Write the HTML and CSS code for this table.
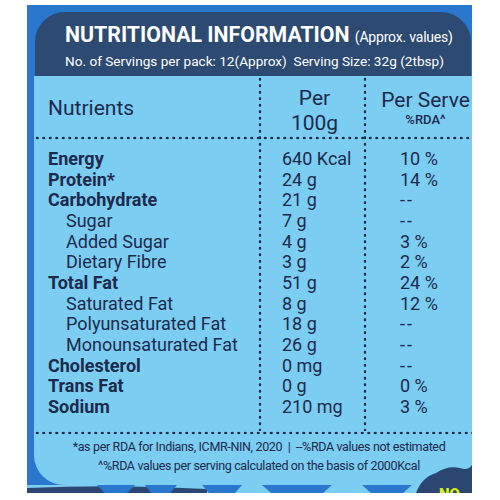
FILE: index.html
```html
<!DOCTYPE html>
<html lang="en">
<head>
    <meta charset="UTF-8">
    <title>Nutritional Information</title>
    <link rel="stylesheet" href="styles.css">
</head>
<body>
    <div class="label">
        <div class="head">
            <h1 class="title">NUTRITIONAL INFORMATION <span class="approx">(Approx. values)</span></h1>
            <p class="serving">No. of Servings per pack: 12(Approx)&nbsp; Serving Size: 32g (2tbsp)</p>
        </div>

        <div class="panel">
            <div class="facts">
                <div class="col col-name">
                    <div class="col-head">Nutrients</div>
                    <ul class="col-body">
                        <li class="main">Energy</li>
                        <li class="main">Protein*</li>
                        <li class="main">Carbohydrate</li>
                        <li class="sub">Sugar</li>
                        <li class="sub">Added Sugar</li>
                        <li class="sub">Dietary Fibre</li>
                        <li class="main">Total Fat</li>
                        <li class="sub">Saturated Fat</li>
                        <li class="sub">Polyunsaturated Fat</li>
                        <li class="sub">Monounsaturated Fat</li>
                        <li class="main">Cholesterol</li>
                        <li class="main">Trans Fat</li>
                        <li class="main">Sodium</li>
                    </ul>
                </div>
                <div class="col col-100">
                    <div class="col-head head-center">Per<br>100g</div>
                    <ul class="col-body">
                        <li>640 Kcal</li>
                        <li>24 g</li>
                        <li>21 g</li>
                        <li>7 g</li>
                        <li>4 g</li>
                        <li>3 g</li>
                        <li>51 g</li>
                        <li>8 g</li>
                        <li>18 g</li>
                        <li>26 g</li>
                        <li>0 mg</li>
                        <li>0 g</li>
                        <li>210 mg</li>
                    </ul>
                </div>
                <div class="col col-serve">
                    <div class="col-head head-center">
                        <span>Per Serve</span>
                        <small>%RDA^</small>
                    </div>
                    <ul class="col-body">
                        <li>10 %</li>
                        <li>14 %</li>
                        <li class="na">--</li>
                        <li class="na">--</li>
                        <li>3 %</li>
                        <li>2 %</li>
                        <li>24 %</li>
                        <li>12 %</li>
                        <li class="na">--</li>
                        <li class="na">--</li>
                        <li class="na">--</li>
                        <li>0 %</li>
                        <li>3 %</li>
                    </ul>
                </div>
            </div>

            <div class="notes">
                <p>*as per RDA for Indians, ICMR-NIN, 2020 &nbsp;|&nbsp; --%RDA values not estimated</p>
                <p>^%RDA values per serving calculated on the basis of 2000Kcal</p>
            </div>
        </div>

        <!-- bottom artwork strip -->
        <svg class="strip" width="445" height="8" viewBox="0 0 445 8">
            <rect x="0" y="0" width="445" height="8" fill="#7bcdf2"/>
            <path d="M0 3 Q90 -1 180 4 L180 8 L0 8 Z" fill="#2b4671"/>
            <path d="M70 0 L108 0 L100 8 L78 8 Z" fill="#2a78cd"/>
            <path d="M118 0 L150 0 L143 8 L124 8 Z" fill="#2a78cd"/>
            <path d="M175 0 L215 0 L208 8 L182 8 Z" fill="#2a78cd"/>
            <path d="M235 0 L305 0 L296 8 L244 8 Z" fill="#2a78cd"/>
            <path d="M335 0 L385 0 L376 8 L344 8 Z" fill="#2a78cd"/>
        </svg>

        <svg class="corner" width="56" height="30" viewBox="0 0 56 30">
            <path d="M0 30 Q6 14 20 10 Q32 2 44 5 Q52 8 56 2 L56 30 Z" fill="#2b4671"/>
            <text x="23" y="36" class="no">NO</text>
        </svg>
    </div>
</body>
</html>
```

FILE: styles.css
```css
html, body {
    margin: 0;
    padding: 0;
}
body {
    background: #fff;
    font-family: Roboto, "Noto Sans", sans-serif;
    color: #1c2a4c;
}
.label {
    position: relative;
    width: 445px;
    height: 488px;
    margin: 5px 0 0 27px;
    background: #2a78cd;
    display: flex;
    flex-direction: column;
    overflow: hidden;
}
/* HEADER */
.head {
    margin: 7px 1px 0 8px;
    height: 64px;
    box-sizing: border-box;
    padding: 11px 0 0 30px;
    background: #2c4a72;
    border-radius: 30px 30px 0 0;
    color: #fff;
}
.title {
    margin: 0;
    font-size: 21.3px;
    line-height: 24px;
    font-weight: 700;
    white-space: nowrap;
}
.approx {
    font-size: 14px;
    font-weight: 400;
    letter-spacing: -0.2px;
}
.serving {
    margin: 4px 0 0 0;
    font-size: 13.6px;
    line-height: 17px;
    white-space: nowrap;
}
/* TABLE PANEL */
.panel {
    flex: 1;
    margin-left: 7px;
    background: #7bcdf2;
    border-bottom-left-radius: 30px;
    display: flex;
    flex-direction: column;
}
.facts {
    display: flex;
}
.col {
    background: radial-gradient(circle, #1d2a48 1.1px, transparent 1.6px) right top / 4px 6.5px repeat-y;
}
.col-serve {
    background: none;
    flex: 1;
}
.col-name { width: 228px; }
.col-100 { width: 105px; }
.col-head {
    height: 64px;
    box-sizing: border-box;
    padding-left: 14px;
    display: flex;
    align-items: center;
    font-size: 21px;
    background: radial-gradient(circle, #1d2a48 1.1px, transparent 1.6px) left bottom / 6.5px 4px repeat-x;
}
.head-center {
    padding: 0;
    flex-direction: column;
    justify-content: center;
    text-align: center;
    line-height: 25px;
}
.col-100 .head-center { padding-top: 5px; }
.col-serve .head-center {
    padding-left: 12px;
    justify-content: flex-start;
    padding-top: 12px;
}
.col-serve small {
    font-size: 13px;
    line-height: 14px;
    font-weight: 500;
}
.col-body {
    list-style: none;
    margin: 0;
    padding: 9px 0 13px 0;
    font-size: 18px;
    line-height: 20.67px;
}
.col-name .col-body li { padding-left: 14px; }
.col-name .col-body li.main { font-weight: 700; }
.col-name .col-body li.sub { padding-left: 32px; }
.col-100 .col-body { padding-left: 20px; }
.col-serve .col-body { padding-left: 33px; }
.col-body li.na { letter-spacing: 2px; }
/* FOOTNOTES */
.notes {
    flex: 1;
    padding: 6px 0 0 12px;
    text-align: center;
    background: radial-gradient(circle, #1d2a48 1.1px, transparent 1.6px) left top / 6.5px 4px repeat-x;
}
.notes p {
    margin: 0;
    font-size: 12.5px;
    line-height: 19px;
    letter-spacing: -0.35px;
    white-space: nowrap;
}
.strip {
    display: block;
    flex: none;
}
.corner {
    position: absolute;
    right: 0;
    bottom: 0;
}
.no {
    font-family: Roboto, sans-serif;
    font-weight: 900;
    font-size: 15px;
    fill: #d6f01e;
}
```
